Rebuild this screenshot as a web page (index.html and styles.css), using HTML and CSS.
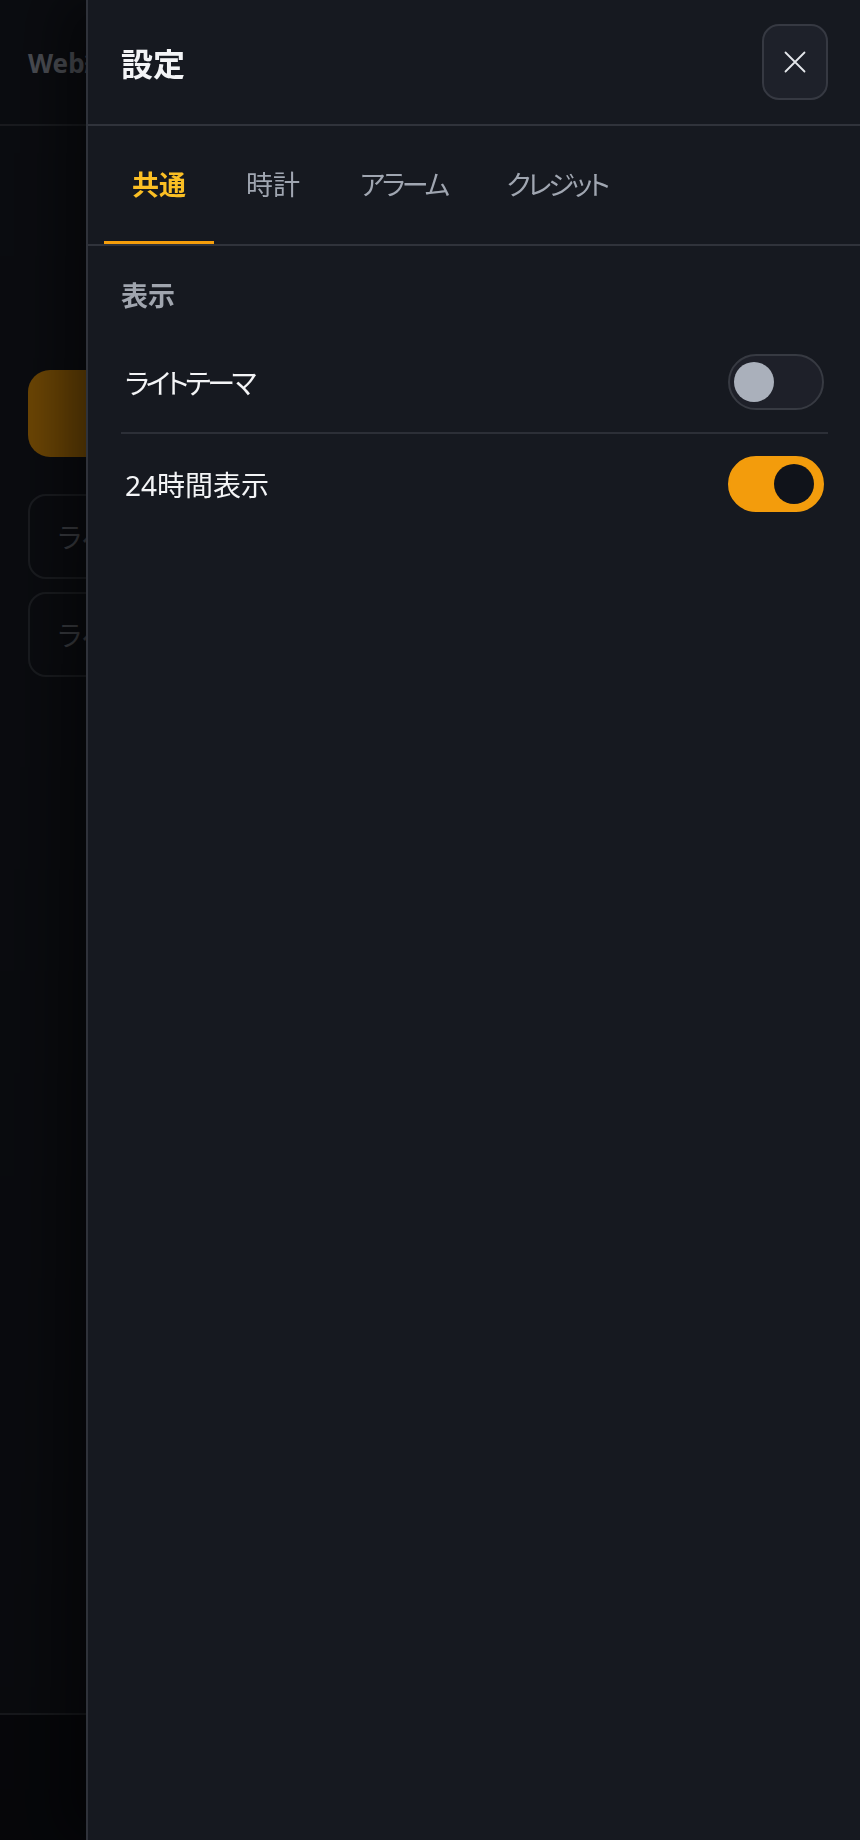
FILE: index.html
```html
<!DOCTYPE html>
<html lang="ja">
<head>
  <meta charset="UTF-8">
  <title>設定</title>
  <link rel="stylesheet" href="styles.css">
</head>
<body>

  <!-- 背景のアプリ本体 -->
  <div class="app">
    <header class="app-header">
      <div class="app-title">Web総</div>
    </header>
    <main class="app-main">
      <button class="add-btn"></button>
      <div class="alarm-card"><span class="card-label">ラベル</span></div>
      <div class="alarm-card"><span class="card-label">ラベル</span></div>
    </main>
    <nav class="app-nav"></nav>
  </div>

  <div class="overlay"></div>

  <!-- 設定パネル -->
  <aside class="drawer">
    <div class="drawer-header">
      <h2 class="drawer-title">設定</h2>
      <button class="close-btn" aria-label="閉じる">
        <svg width="22" height="22" viewBox="0 0 22 22" fill="none" stroke="currentColor" stroke-width="1.8" stroke-linecap="round">
          <path d="M1.5 1.5L20.5 20.5M20.5 1.5L1.5 20.5"/>
        </svg>
      </button>
    </div>

    <div class="tabs">
      <button class="tab active">共通</button>
      <button class="tab">時計</button>
      <button class="tab kana">アラーム</button>
      <button class="tab kana">クレジット</button>
    </div>

    <div class="drawer-body">
      <h3 class="section-title">表示</h3>

      <div class="setting-row">
        <span class="setting-label kana">ライトテーマ</span>
        <span class="toggle"><span class="knob"></span></span>
      </div>
      <div class="setting-row">
        <span class="setting-label">24時間表示</span>
        <span class="toggle on"><span class="knob"></span></span>
      </div>
    </div>
  </aside>

</body>
</html>
```

FILE: styles.css
```css
* {
  box-sizing: border-box;
}

html, body {
  height: 100%;
}

body {
  margin: 0;
  font-family: "Noto Sans", "Noto Sans CJK JP", sans-serif;
  font-feature-settings: "palt";
  background-color: #181b24;
  color: #f3f4f6;
  overflow: hidden;
}

button {
  font-family: inherit;
  font-feature-settings: inherit;
}

/* カタカナは詰め気味に */
.kana {
  letter-spacing: -0.12em;
}

/* ---- 背景アプリ ---- */
.app {
  height: 100%;
  display: flex;
  flex-direction: column;
}

.app-header {
  height: 126px;
  padding: 0 28px;
  display: flex;
  align-items: center;
  border-bottom: 2px solid #383c45;
}

.app-title {
  font-size: 26px;
  font-weight: bold;
  color: #a4a9b6;
  white-space: nowrap;
}

.app-main {
  flex: 1;
  padding: 244px 28px 0;
  display: flex;
  flex-direction: column;
  gap: 13px;
}

.add-btn {
  height: 87px;
  border: none;
  border-radius: 22px;
  background-color: #f59e0b;
  margin-bottom: 24px;
}

.alarm-card {
  height: 85px;
  border: 2px solid #3c4049;
  border-radius: 18px;
  padding: 0 28px;
  display: flex;
  align-items: center;
}

.card-label {
  font-size: 27px;
  color: #858a95;
  white-space: nowrap;
}

.app-nav {
  height: 127px;
  border-top: 2px solid #3a3e47;
  background-color: #10121a;
}

.overlay {
  position: fixed;
  inset: 0;
  background: linear-gradient(to bottom, rgba(0,0,0,0.55), rgba(0,0,0,0.62));
}

/* ---- 設定パネル ---- */
.drawer {
  position: fixed;
  top: 0;
  right: 0;
  bottom: 0;
  width: 774px;
  background-color: #161920;
  border-left: 2px solid #2f323a;
  box-shadow: -24px 0 48px rgba(0,0,0,0.45);
  display: flex;
  flex-direction: column;
}

.drawer-header {
  height: 126px;
  padding: 0 32px 0 33px;
  display: flex;
  align-items: center;
  justify-content: space-between;
  border-bottom: 2px solid #30333b;
}

.drawer-title {
  margin: 0;
  font-size: 32px;
  font-weight: bold;
  color: #f3f4f6;
}

.close-btn {
  width: 66px;
  height: 76px;
  border: 2px solid #363942;
  border-radius: 17px;
  background-color: #1e212a;
  color: #e5e7eb;
  display: flex;
  align-items: center;
  justify-content: center;
  padding: 0;
  cursor: pointer;
}

.tabs {
  height: 120px;
  padding: 0 16px;
  display: flex;
  gap: 4px;
  border-bottom: 2px solid #30333b;
}

.tab {
  height: 118px;
  padding: 0 28px;
  border: none;
  border-bottom: 3px solid transparent;
  background: none;
  font-size: 27px;
  color: #a0a6b1;
  cursor: pointer;
}

.tab.active {
  color: #fbbf24;
  font-weight: bold;
  border-bottom-color: #f59e0b;
}

.drawer-body {
  padding: 30px 32px 0 33px;
}

.section-title {
  margin: 0 0 16px;
  font-size: 27px;
  font-weight: bold;
  color: #a0a5ae;
  line-height: 40px;
}

.setting-row {
  display: flex;
  align-items: center;
  justify-content: space-between;
  padding: 22px 4px;
}

.setting-row + .setting-row {
  border-top: 2px solid #2c2f37;
}

.setting-label {
  font-size: 28px;
  color: #f3f4f6;
}

.toggle {
  width: 96px;
  height: 56px;
  border-radius: 28px;
  border: 2px solid #373a42;
  background-color: #1e2029;
  display: flex;
  align-items: center;
  padding: 0 4px;
}

.knob {
  width: 40px;
  height: 40px;
  border-radius: 50%;
  background-color: #aab0bb;
}

.toggle.on {
  background-color: #f39c0c;
  border-color: #f39c0c;
}

.toggle.on .knob {
  background-color: #10131a;
  margin-left: 40px;
}
```
